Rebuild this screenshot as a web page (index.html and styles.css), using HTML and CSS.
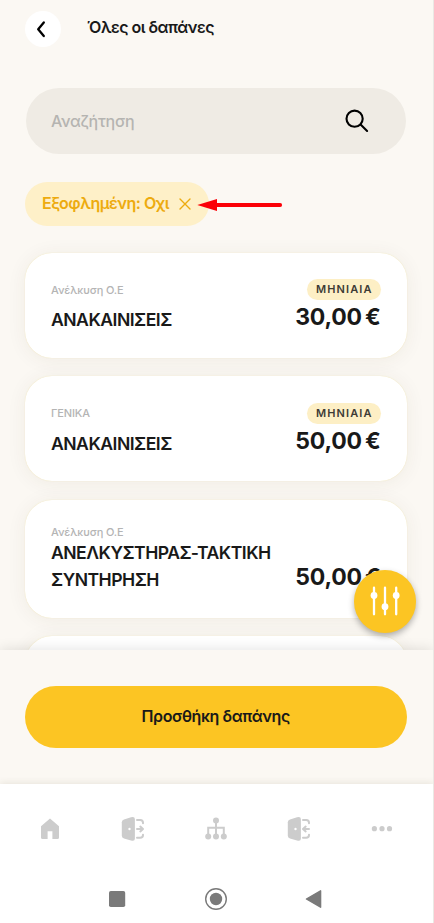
FILE: index.html
```html
<!DOCTYPE html>
<html lang="el">
<head>
<meta charset="utf-8">
<meta name="viewport" content="width=device-width, initial-scale=1">
<title>Όλες οι δαπάνες</title>
<link rel="stylesheet" href="styles.css">
</head>
<body>
<div class="app">
  <main class="content">
    <header class="header">
      <button class="back" aria-label="Πίσω"><svg width="36" height="36" viewBox="0 0 36 36"><path d="m18.8 11.4-5.6 6.8 5.6 6.8" fill="none" stroke="#000" stroke-width="2.3" stroke-linecap="round" stroke-linejoin="round"/></svg></button>
      <h1 class="title">Όλες οι δαπάνες</h1>
    </header>
    <div class="search">
      <span class="placeholder">Αναζήτηση</span>
      <svg class="search-icon" width="24" height="24" viewBox="0 0 24 24"><g fill="none" stroke="#000" stroke-width="2.1" stroke-linecap="round"><circle cx="9.6" cy="9.7" r="8.1"/><path d="m15.6 15.6 6.5 6.3"/></g></svg>
    </div>
    <div class="filters">
      <div class="chip">
        <span class="chip-text">Εξοφλημένη: Οχι</span>
        <svg width="12" height="12" viewBox="0 0 12 12"><path d="m1 1 10 10M11 1 1 11" stroke="#edab0f" stroke-width="1.4" stroke-linecap="round"/></svg>
      </div>
      <svg class="arrow" width="86" height="14" viewBox="0 0 86 14"><path d="M18 7H83.2" stroke="#fb0007" stroke-width="3.8" stroke-linecap="round"/><path d="M.3 7 20 1v12z" fill="#fb0007"/></svg>
    </div>
    <section class="list">
      <article class="card">
        <div class="info"><span class="category">Ανέλκυση Ο.Ε</span><span class="name">ΑΝΑΚΑΙΝΙΣΕΙΣ</span></div>
        <div class="side"><span class="badge">ΜΗΝΙΑΙΑ</span><span class="amount">30,00 €</span></div>
      </article>
      <article class="card">
        <div class="info"><span class="category">ΓΕΝΙΚΑ</span><span class="name">ΑΝΑΚΑΙΝΙΣΕΙΣ</span></div>
        <div class="side"><span class="badge">ΜΗΝΙΑΙΑ</span><span class="amount">50,00 €</span></div>
      </article>
      <article class="card tall">
        <div class="info"><span class="category">Ανέλκυση Ο.Ε</span><span class="name">ΑΝΕΛΚΥΣΤΗΡΑΣ-ΤΑΚΤΙΚΗ<br>ΣΥΝΤΗΡΗΣΗ</span></div>
        <div class="side"><span class="amount">50,00 €</span></div>
      </article>
      <article class="card"></article>
    </section>
    <button class="fab" aria-label="Φίλτρα"><svg width="30" height="30" viewBox="0 0 30 30"><g stroke="#fff" stroke-width="2.3" stroke-linecap="round"><path d="M4 1.7v26.6M15 1.7v26.6M26.2 1.7v26.6"/></g><g fill="#fff"><circle cx="4" cy="9.5" r="3.4"/><circle cx="15" cy="20.7" r="3.4"/><circle cx="26.2" cy="9.5" r="3.4"/></g></svg></button>
  </main>
  <div class="action"><button class="add"><span class="add-text">Προσθήκη δαπάνης</span></button></div>
  <footer class="footer">
    <nav class="tabs">
      <svg width="24" height="24" viewBox="0 0 24 24"><path d="M12 1.4 3 9.2v11.3q0 1.5 1.5 1.5H9.6v-7.8h4.8V22h5.1q1.5 0 1.5-1.5V9.2z" fill="#ccc"/></svg>
      <svg width="24" height="24" viewBox="0 0 24 24"><path d="m3 2.4 7-2.1q3.9-.9 3.9 2v19.4q0 2.7-3.9 1.7L3 21.5Q.8 20.8.8 18.8V5.3Q.8 3.1 3 2.4z" fill="#ccc"/><circle cx="8.5" cy="12" r="1.2" fill="#fff"/><path d="M16 2.9h3.2Q22 2.9 22 5.7v.5M16 20.8h3.2Q22 20.8 22 18v-.3M16 12h6M19.3 9.6 22 12l-2.7 2.4" fill="none" stroke="#ccc" stroke-width="2" stroke-linecap="round" stroke-linejoin="round"/></svg>
      <svg width="24" height="24" viewBox="0 0 24 24"><g fill="none" stroke="#ccc" stroke-width="2"><path d="M12 4v16M4.2 20v-9.3h15.6V20"/></g><g fill="#ccc"><circle cx="12" cy="3.6" r="3"/><circle cx="4.2" cy="19.5" r="3"/><circle cx="12" cy="19.5" r="3"/><circle cx="19.8" cy="19.5" r="3"/></g></svg>
      <svg width="24" height="24" viewBox="0 0 24 24"><path d="m3 2.4 7-2.1q3.9-.9 3.9 2v19.4q0 2.7-3.9 1.7L3 21.5Q.8 20.8.8 18.8V5.3Q.8 3.1 3 2.4z" fill="#ccc"/><circle cx="8.5" cy="12" r="1.2" fill="#fff"/><path d="M16 2.9h3.2Q22 2.9 22 5.7v.5M16 20.8h3.2Q22 20.8 22 18v-.3M16.5 12H22M18.7 9.6 16 12l2.7 2.4" fill="none" stroke="#ccc" stroke-width="2" stroke-linecap="round" stroke-linejoin="round"/></svg>
      <svg width="24" height="24" viewBox="0 0 24 24"><g fill="#ccc"><circle cx="4.4" cy="11.7" r="2.6"/><circle cx="12" cy="11.7" r="2.6"/><circle cx="19.5" cy="11.7" r="2.6"/></g></svg>
    </nav>
    <div class="system">
      <svg width="24" height="24" viewBox="0 0 24 24"><rect x="4" y="4" width="16.2" height="16" rx="1.8" fill="#7a7a7a"/></svg>
      <svg width="24" height="24" viewBox="0 0 24 24"><circle cx="12" cy="12" r="10.3" fill="none" stroke="#7a7a7a" stroke-width="1.4"/><circle cx="12" cy="12" r="6.2" fill="#7a7a7a"/></svg>
      <svg width="24" height="24" viewBox="0 0 24 24"><path d="M4.4 12 18.6 3.8v16.4z" fill="#7a7a7a" stroke="#7a7a7a" stroke-width="1.4" stroke-linejoin="round"/></svg>
    </div>
  </footer>
</div>
</body>
</html>
```
FILE: styles.css
```css
* { box-sizing: border-box; }
body { margin: 0; background: #fbf8f3; font-family: Inter, "Open Sans", sans-serif; color: #191919; }
button { border: 0; padding: 0; font: inherit; color: inherit; }
svg { display: block; flex: none; }
span { white-space: nowrap; }
.app { width: 434px; height: 923px; display: flex; flex-direction: column; overflow: hidden; border-right: 1px solid #ebe8e4; }
.content { position: relative; height: 650px; flex: none; overflow: hidden; padding: 10.5px 26px 0 24.5px; }
.header { display: flex; align-items: center; gap: 26.5px; height: 36px; }
.back { width: 36px; height: 36px; border-radius: 50%; background: #fff; }
.title { margin: 0; padding-bottom: 2.5px; font-size: 16px; line-height: 24px; font-weight: 600; letter-spacing: -.52px; white-space: nowrap; }
.search { display: flex; align-items: center; justify-content: space-between; height: 66px; margin: 41.2px 1px 0; padding: 0 37px 0 25.5px; border-radius: 34px; background: #efebe4; }
.placeholder { padding-top: 1px; font-size: 16px; font-weight: 500; letter-spacing: -.25px; color: #b5b4b1; }
.filters { position: relative; height: 44px; margin-top: 28.3px; }
.chip { display: flex; align-items: center; justify-content: space-between; width: 184px; height: 44px; padding: 0 17.5px; border-radius: 22px; background: #fef0c8; }
.chip-text { padding-bottom: 2px; font-size: 16px; font-weight: 600; letter-spacing: -.5px; color: #edab0f; }
.arrow { position: absolute; left: 172.7px; top: 16.5px; }
.list { display: flex; flex-direction: column; gap: 18.5px; margin-top: 27px; }
.card { display: flex; justify-content: space-between; flex: none; height: 105px; padding: 26.5px 26.5px 0; border-radius: 27px; background: #fff; box-shadow: 0 0 1px #eee0a4, 0 2px 20px rgba(80, 65, 35, .065); }
.info, .side { display: flex; flex-direction: column; }
.info { padding-top: 2.5px; }
.side { align-items: flex-end; }
.category { font-size: 11px; line-height: 16px; font-weight: 500; letter-spacing: -.12px; color: #b4b4b4; }
.name { margin-top: 8.3px; font-size: 17.6px; line-height: 27px; font-weight: 600; letter-spacing: -.52px; }
.badge { height: 21px; padding: 0 8px 0 9.5px; border-radius: 11px; background: #fdefc5; font-size: 11px; line-height: 21px; font-weight: 600; letter-spacing: 1.1px; color: #3e3b35; }
.amount { margin-top: .8px; font-size: 23px; line-height: 32px; font-weight: 700; letter-spacing: -.2px; word-spacing: -2.2px; }
.tall { height: 118px; padding-top: 21.5px; }
.tall .name { margin-top: -.5px; }
.tall .amount { margin-top: 39.5px; }
.fab { position: absolute; left: 353.8px; top: 570px; width: 62.5px; height: 62.5px; display: flex; align-items: center; justify-content: center; border-radius: 50%; background: #fcc523; box-shadow: 0 3px 6px rgba(0, 0, 0, .3); }
.action { position: relative; height: 134px; flex: none; padding: 35.5px 26px 0 24.5px; background: #fbf8f3; box-shadow: 0 -1px 12px rgba(0, 0, 0, .11); }
.add { display: flex; align-items: center; justify-content: center; width: 100%; height: 62.5px; border-radius: 32px; background: #fcc523; }
.add-text { padding-bottom: 2px; font-size: 16px; font-weight: 600; letter-spacing: -.4px; }
.footer { position: relative; flex: 1; background: #fff; box-shadow: 0 -1px 7px rgba(70, 60, 30, .11); }
.tabs { display: flex; justify-content: space-between; padding: 32.5px 39px 0 38px; }
.system { display: flex; justify-content: space-between; padding: 46px 107px 0 105px; }
```
